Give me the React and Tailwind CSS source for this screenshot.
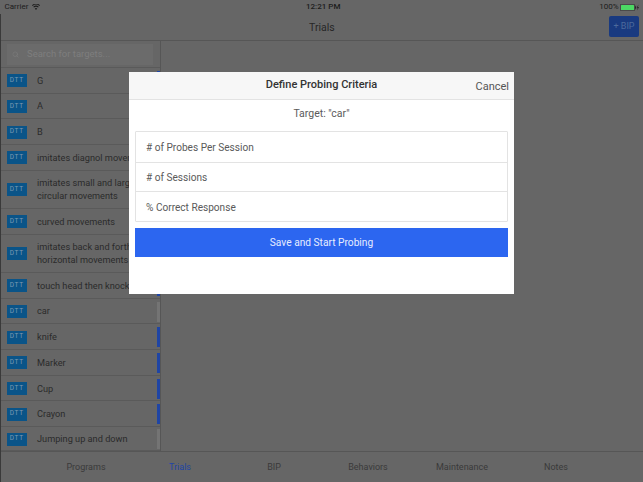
import React from 'react';
import { Search } from 'lucide-react';

const targets = [
  { lines: ['G'], h: 'h-[25.7px]', bar: 'bg-[#1f45a5]' },
  { lines: ['A'], h: 'h-[25.7px]', bar: 'bg-[#1f45a5]' },
  { lines: ['B'], h: 'h-[25.7px]', bar: 'bg-[#1f45a5]' },
  { lines: ['imitates diagnol movements'], h: 'h-[25.6px]', bar: 'bg-[#1f45a5]' },
  { lines: ['imitates small and large', 'circular movements'], h: 'h-[38px]', bar: 'bg-[#1f45a5]' },
  { lines: ['curved movements'], h: 'h-[26px]', bar: 'bg-[#1f45a5]' },
  { lines: ['imitates back and forth', 'horizontal movements'], h: 'h-[38px]', bar: 'bg-[#1f45a5]' },
  { lines: ['touch head then knock'], h: 'h-[26px]', bar: 'bg-[#1f45a5]' },
  { lines: ['car'], h: 'h-[25.7px]', bar: 'bg-[#747474]' },
  { lines: ['knife'], h: 'h-[25.7px]', bar: 'bg-[#1f45a5]' },
  { lines: ['Marker'], h: 'h-[25.7px]', bar: 'bg-[#1f45a5]' },
  { lines: ['Cup'], h: 'h-[25.7px]', bar: 'bg-[#1f45a5]' },
  { lines: ['Crayon'], h: 'h-[25.7px]', bar: 'bg-[#1f45a5]' },
  { lines: ['Jumping up and down'], h: 'h-[24px]', bar: 'bg-[#747474]' },
];

const tabs = ['Programs', 'Trials', 'BIP', 'Behaviors', 'Maintenance', 'Notes'];
const fields = ['# of Probes Per Session', '# of Sessions', '% Correct Response'];

const TargetRow = ({ target }) => (
  <div className={`${target.h} flex items-center pl-[6px] pt-[1px] border-b border-[#5a5a5a] overflow-hidden`}>
    <span className="w-[19.5px] h-[13px] shrink-0 flex items-center justify-center bg-[#0a5488] text-[#7d9ab2] text-[6.5px] tracking-[0.6px]">
      DTT
    </span>
    <div className="ml-[10.5px] pt-[0.5px] flex-1 min-w-0 text-[9.2px] leading-[12.6px] text-[#2b2b2b] whitespace-nowrap">
      {target.lines.map((line) => <div key={line}>{line}</div>)}
    </div>
    <span className={`w-[3px] h-[20px] shrink-0 ${target.bar}`}></span>
  </div>
);

export default function App() {
  return (
    <div className="relative w-[643px] h-[482px] overflow-hidden bg-[#666666] font-['Roboto',sans-serif]">
      {/* status bar */}
      <div className="h-[14px] flex items-center justify-between pl-[4.5px] pr-[4px] text-[8px] text-[#1c1c1c]">
        <div className="flex items-center gap-[4px]">
          <span>Carrier</span>
          <svg width="8" height="6" viewBox="0 0 16 12" fill="#1c1c1c">
            <path d="M8 12 5.6 9a3.8 3.8 0 0 1 4.8 0L8 12ZM3.9 7.1 2.6 5.5a8.4 8.4 0 0 1 10.8 0l-1.3 1.6a6.4 6.4 0 0 0-8.2 0ZM1.3 3.9 0 2.4a12.4 12.4 0 0 1 16 0l-1.3 1.5a10.4 10.4 0 0 0-13.4 0Z" />
          </svg>
        </div>
        <span className="absolute left-[306px] top-[2px] font-medium text-[8px] leading-[10px]">12:21 PM</span>
        <div className="flex items-center gap-[1.5px]">
          <span>100%</span>
          <svg width="19" height="7" viewBox="0 0 19 7">
            <rect x="0.25" y="0.25" width="14.5" height="6.5" rx="1.2" fill="none" stroke="#1c1c1c" strokeWidth="0.5" />
            <rect x="1" y="1" width="13" height="5" rx="0.6" fill="#4cd964" />
            <rect x="15.2" y="2.3" width="0.9" height="2.4" fill="#1c1c1c" />
            <path d="M18.4 0.6 16.9 3.8h0.8l-0.4 2.6 1.6-3.4h-0.9l0.4-2.4Z" fill="#1c1c1c" />
          </svg>
        </div>
      </div>

      <div className="h-[468px] flex flex-col border-l border-[#3a3a3a]">
        {/* nav bar */}
        <div className="relative h-[27px] shrink-0 flex items-center justify-end pr-[3px] pb-[1px] border-b border-[#565656]">
          <span className="absolute left-[308px] top-[6px] text-[10.5px] leading-[16px] text-[#262626]">Trials</span>
          <div className="w-[30px] h-[21px] mr-[1px] flex items-center justify-center rounded-[2px] bg-[#193a80] text-[9px] text-[#4d6a9c]">
            + BIP
          </div>
        </div>

        <div className="flex-1 min-h-0 flex">
          {/* target list */}
          <div className="w-[160px] shrink-0 border-r border-[#565656]">
            <div className="h-[27px] flex items-center px-[6px] border-b border-[#5a5a5a]">
              <div className="w-[146px] h-[21px] flex items-center gap-[8px] pl-[5px] bg-[#6b6b6b] text-[9.5px] text-[#7e7e7e]">
                <Search size={7} strokeWidth={2} className="text-[#7e7e7e]" />
                <span>Search for targets...</span>
              </div>
            </div>
            {targets.map((target) => <TargetRow key={target.lines[0]} target={target} />)}
          </div>
          <div className="flex-1"></div>
        </div>

        {/* tab bar */}
        <div className="h-[31px] shrink-0 grid grid-cols-6 items-center pl-[38px] pr-[40px] pt-[1px] border-t border-[#565656] text-[9px] text-[#3a3a3a]">
          {tabs.map((tab) => (
            <span key={tab} className={tab === 'Trials' ? 'text-center text-[#1f45a5]' : 'text-center'}>{tab}</span>
          ))}
        </div>
      </div>

      {/* probing modal */}
      <div className="absolute left-[129px] top-[72px] w-[385px] h-[222px] bg-white">
        <div className="relative h-[28px] flex items-center justify-center bg-[#f7f7f7] border-b border-[#e3e3e3]">
          <span className="text-[11px] font-medium text-[#333333]">Define Probing Criteria</span>
          <span className="absolute right-[5px] top-[7px] text-[11px] leading-[16px] text-[#555555]">Cancel</span>
        </div>
        <div className="px-[6px]">
          <div className="h-[31px] pb-[3px] flex items-center justify-center text-[10.5px] text-[#5a5a5a]">Target: "car"</div>
          <div className="border border-[#e3e3e3] rounded-[1px]">
            {fields.map((field, i) => (
              <div key={field} className={`h-[29.7px] flex items-center pl-[10px] pt-[1px] text-[10.1px] text-[#5a5a5a] ${i > 0 ? 'border-t border-[#e3e3e3]' : ''}`}>
                {field}
              </div>
            ))}
          </div>
          <div className="mt-[6px] h-[29px] flex items-center justify-center bg-[#2c66f0] text-[10.2px] text-[#e6edff]">
            Save and Start Probing
          </div>
        </div>
      </div>
    </div>
  );
}
